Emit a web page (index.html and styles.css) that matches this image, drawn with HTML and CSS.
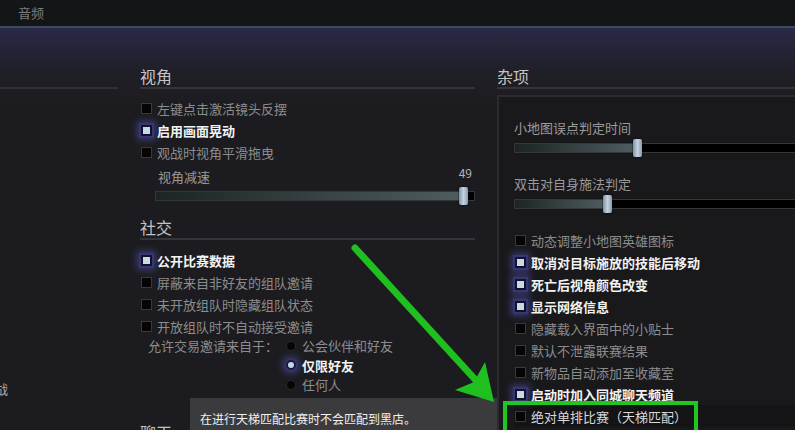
FILE: index.html
```html
<!DOCTYPE html>
<html lang="zh-CN">
<head>
  <meta charset="UTF-8">
  <meta name="viewport" content="width=device-width, initial-scale=1.0">
  <title>设置</title>
  <link rel="stylesheet" href="styles.css">
</head>
<body>

<div class="topbar">
  <span class="tab">音频</span>
</div>

<div class="page">
  <div class="sidebar">
    <div class="sidebar-rule"></div>
    <div class="sidebar-item">观战</div>
  </div>

  <div class="column main">
    <h2 class="section-title">视角</h2>
    <div class="option"><span class="box"></span>左键点击激活镜头反摆</div>
    <div class="option on"><span class="box"></span>启用画面晃动</div>
    <div class="option"><span class="box"></span>观战时视角平滑拖曳</div>
    <div class="slider-label indent"><span>视角减速</span><span>49</span></div>
    <div class="slider wide">
      <div class="slider-fill" style="width: 303px"></div>
      <span class="slider-knob" style="left: 303px"></span>
    </div>

    <h2 class="section-title social">社交</h2>
    <div class="option on"><span class="box"></span>公开比赛数据</div>
    <div class="option"><span class="box"></span>屏蔽来自非好友的组队邀请</div>
    <div class="option"><span class="box"></span>未开放组队时隐藏组队状态</div>
    <div class="option"><span class="box"></span>开放组队时不自动接受邀请</div>
    <div class="trade">
      <div class="trade-label">允许交易邀请来自于：</div>
      <div class="radios">
        <div class="radio"><span class="dot"></span>公会伙伴和好友</div>
        <div class="radio on"><span class="dot"></span>仅限好友</div>
        <div class="radio"><span class="dot"></span>任何人</div>
      </div>
    </div>

    <h2 class="section-title next">聊天</h2>
  </div>

  <div class="column misc">
    <h2 class="section-title">杂项</h2>
    <div class="panel">
      <div class="slider-label"><span>小地图误点判定时间</span><span>0</span></div>
      <div class="slider">
        <div class="slider-fill" style="width: 118px"></div>
        <span class="slider-knob" style="left: 118px"></span>
      </div>
      <div class="slider-label second"><span>双击对自身施法判定</span><span>0</span></div>
      <div class="slider">
        <div class="slider-fill" style="width: 88px"></div>
        <span class="slider-knob" style="left: 88px"></span>
      </div>

      <div class="options">
        <div class="option"><span class="box"></span>动态调整小地图英雄图标</div>
        <div class="option on"><span class="box"></span>取消对目标施放的技能后移动</div>
        <div class="option on"><span class="box"></span>死亡后视角颜色改变</div>
        <div class="option on"><span class="box"></span>显示网络信息</div>
        <div class="option"><span class="box"></span>隐藏载入界面中的小贴士</div>
        <div class="option"><span class="box"></span>默认不泄露联赛结果</div>
        <div class="option"><span class="box"></span>新物品自动添加至收藏室</div>
        <div class="option on"><span class="box"></span>启动时加入同城聊天频道</div>
        <div class="option marked"><span class="box"></span>绝对单排比赛（天梯匹配）</div>
      </div>
    </div>
  </div>

  <div class="tooltip">在进行天梯匹配比赛时不会匹配到黑店。</div>
  <div class="highlight"></div>

  <svg class="arrow" width="795" height="402" viewBox="0 28 795 402">
    <line x1="355" y1="248" x2="482" y2="387" stroke="#1fbf1f" stroke-width="7" stroke-linecap="round"/>
    <polygon points="494,402 455,390 474,382 485,362" fill="#1fbf1f"/>
  </svg>
</div>

</body>
</html>
```

FILE: styles.css
```css
html, body {
  margin: 0;
  padding: 0;
}
body {
  width: 795px;
  height: 430px;
  overflow: hidden;
  background-color: #1c1c20;
  color: #8c8c8c;
  font-family: "Noto Sans CJK SC", "Noto Sans", sans-serif;
  font-size: 13px;
}
.topbar {
  height: 26px;
  background-color: #141517;
  border-bottom: 2px solid #3a4d5e;
  display: flex;
  align-items: center;
  padding-left: 18px;
}
.tab {
  color: #7c7c7c;
  font-size: 13px;
  line-height: 16px;
}
.page {
  position: relative;
  height: 402px;
  display: flex;
  gap: 22px;
  padding-top: 38px;
  box-sizing: border-box;
  background: linear-gradient(#2b2946 0px, #252438 20px, #1e1e24 50px, #1c1c20 80px);
}
.sidebar {
  width: 118px;
  flex-shrink: 0;
  overflow: hidden;
}
.sidebar-rule {
  margin-top: 21px;
  height: 2px;
  background-color: #2f3036;
}
.sidebar-item {
  margin-top: 292px;
  margin-left: -18px;
  color: #a8a8a8;
  line-height: 16px;
}
.column.main {
  width: 335px;
  flex-shrink: 0;
}
.column.misc {
  width: 320px;
  flex-shrink: 0;
}
.section-title {
  margin: 0;
  font-size: 16px;
  font-weight: normal;
  line-height: 20px;
  color: #c4c4c4;
  padding-bottom: 1px;
  border-bottom: 2px solid #34343a;
}
.section-title.social {
  margin-top: 16px;
}
.section-title.next {
  margin-top: 28px;
  border-bottom: none;
}
.main > .section-title + .option {
  margin-top: 8px;
}
.main > .social + .option {
  margin-top: 9px;
}
.option {
  display: flex;
  align-items: center;
  height: 22px;
  padding-left: 1px;
  white-space: nowrap;
}
.box {
  width: 11px;
  height: 11px;
  box-sizing: border-box;
  margin-right: 5px;
  background-color: #050506;
  border: 1px solid #3a3a3e;
  flex-shrink: 0;
}
.option.on {
  color: #f2f2f2;
  font-weight: bold;
}
.option.on .box {
  background-color: #c8dbe2;
  border: 2px solid #12122a;
  box-shadow: 0 0 0 2px #363676, 0 0 7px 4px rgba(90, 90, 200, 0.5);
}
.slider-label {
  display: flex;
  justify-content: space-between;
  line-height: 16px;
  color: #9a9a9a;
}
.slider-label.indent {
  margin-top: 4px;
  padding-left: 18px;
  padding-right: 3px;
  height: 18px;
  align-items: flex-end;
}
.slider-label.indent span:last-child {
  color: #b4b4b4;
  font-size: 12px;
  position: relative;
  top: -4px;
}
.slider {
  position: relative;
  height: 10px;
  margin-top: 6px;
  margin-bottom: 4px;
  background-color: #000;
  border: 1px solid #35363a;
  box-sizing: border-box;
}
.slider.wide {
  margin-left: 15px;
  margin-top: 6px;
}
.slider-fill {
  height: 100%;
  background: linear-gradient(to right, #1c2424, #4d5c5e);
}
.slider-knob {
  position: absolute;
  top: -5px;
  width: 9px;
  height: 18px;
  border-radius: 2px;
  background: linear-gradient(to right, #7f93a6, #c3d3e0 50%, #8a9cb0);
  box-shadow: 0 0 2px #000;
}
.trade {
  display: flex;
  margin-top: -1px;
}
.trade-label {
  padding-left: 8px;
  width: 138px;
  line-height: 20px;
  color: #8c8c8c;
}
.radios {
  display: flex;
  flex-direction: column;
}
.radio {
  display: flex;
  align-items: center;
  height: 19px;
  white-space: nowrap;
}
.radio.on {
  height: 20px;
}
.dot {
  width: 10px;
  height: 10px;
  border-radius: 50%;
  margin-right: 6px;
  background-color: #050506;
  border: 1px solid #2a2a2e;
  box-sizing: border-box;
}
.radio.on {
  color: #f2f2f2;
  font-weight: bold;
}
.radio.on .dot {
  background-color: #c6d4ec;
  border: 2px solid #1a1a3a;
  box-shadow: 0 0 0 1px #363676, 0 0 7px 4px rgba(90, 90, 200, 0.5);
}
.panel {
  margin-top: 6px;
  height: 340px;
  background-color: #19191c;
  border-top: 2px solid #2a2a30;
  border-left: 2px solid #2a2a30;
  padding: 23px 13px 0 15px;
  box-sizing: border-box;
}
.panel .slider {
  margin-top: 7px;
  margin-right: -20px;
}
.slider-label.second {
  margin-top: 23px;
}
.options {
  margin-top: 20px;
}
.option.marked {
  color: #d8d8d8;
  background-color: #141416;
}
.tooltip {
  position: absolute;
  left: 190px;
  top: 370px;
  width: 307px;
  height: 40px;
  box-sizing: border-box;
  padding: 12px 10px 10px;
  background-color: #3b3b3e;
  color: #f0f0f0;
  font-size: 12px;
  line-height: 18px;
}
.highlight {
  position: absolute;
  left: 503px;
  top: 373px;
  width: 195px;
  height: 36px;
  box-sizing: border-box;
  border: 4px solid #1ec81e;
}
.arrow {
  position: absolute;
  left: 0;
  top: 0;
  pointer-events: none;
}
```
